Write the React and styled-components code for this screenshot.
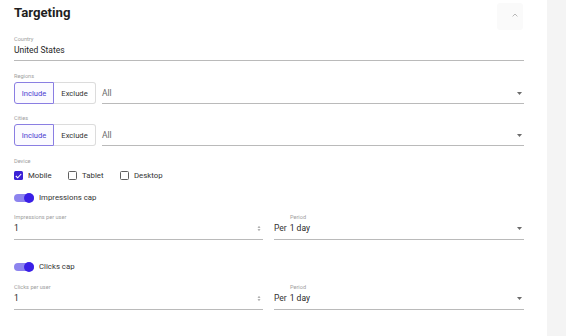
import React from "react";
import styled, { createGlobalStyle } from "styled-components";

const GlobalStyle = createGlobalStyle`
  html, body {
    margin: 0;
    padding: 0;
    background: #fff;
  }
  body {
    font-family: Roboto, "Liberation Sans", sans-serif;
    font-weight: 400;
    color: #2b2b2b;
  }
`;

const Page = styled.div`
  display: flex;
  width: 566px;
  height: 336px;
  overflow: hidden;
`;

const Card = styled.section`
  width: 547px;
  box-sizing: border-box;
  padding: 0 23px 0 14px;
  background: #fff;
  display: flex;
  flex-direction: column;
`;

const Aside = styled.div`
  flex: 1;
  background: #f4f4f4;
`;

const Header = styled.div`
  display: flex;
  justify-content: space-between;
  align-items: flex-start;
  height: 30px;
`;

const Title = styled.h2`
  margin: 5px 0 0;
  font-size: 13.2px;
  line-height: 16px;
  font-weight: 700;
  color: #1e1e1e;
`;

const CollapseButton = styled.button`
  width: 26px;
  height: 27px;
  margin-top: 3px;
  margin-right: 1px;
  padding: 0 5px 4px 0;
  border: none;
  border-radius: 3px;
  background: #fafafa;
  display: flex;
  align-items: center;
  justify-content: flex-end;
`;

const Field = styled.div`
  margin-top: ${(p) => p.mt || 0}px;
  display: flex;
  flex-direction: column;
`;

const Label = styled.div`
  font-size: 5.6px;
  line-height: 7px;
  color: #a0a0a0;
  padding-left: ${(p) => p.indent || 0}px;
`;

const InputRow = styled.div`
  display: flex;
  align-items: center;
  margin-top: 1px;
  height: 12px;
  padding-bottom: ${(p) => p.pb || 4}px;
  border-bottom: 1px solid #bababa;
  font-size: 8.5px;
  line-height: 12px;
  color: #262626;
`;

const Adornment = styled.span`
  margin-right: 3px;
  color: #333;
`;

const Trail = styled.span`
  margin-left: auto;
  margin-right: 2px;
  display: flex;
  align-items: center;
`;

const GroupRow = styled.div`
  display: flex;
  gap: 6px;
  margin-top: 2px;
  height: 22px;
`;

const ToggleGroup = styled.div`
  display: flex;
  width: 82px;
`;

const ToggleButton = styled.button`
  box-sizing: border-box;
  height: 22px;
  width: ${(p) => (p.selected ? 40 : 42)}px;
  padding: 0;
  font-family: inherit;
  font-size: 7.6px;
  font-weight: 400;
  border: 1px solid ${(p) => (p.selected ? "#8a7ee2" : "#dcdcdc")};
  border-left: ${(p) => (p.selected ? "1px solid #8a7ee2" : "none")};
  border-radius: ${(p) => (p.selected ? "3px 0 0 3px" : "0 3px 3px 0")};
  background: ${(p) => (p.selected ? "#fbfaff" : "#fff")};
  color: ${(p) => (p.selected ? "#4a3bd0" : "#333")};
`;

const SelectBox = styled.div`
  flex: 1;
  box-sizing: border-box;
  display: flex;
  align-items: center;
  border-bottom: 1px solid #bababa;
  font-size: 8.5px;
  color: #6a6a6a;
  padding-top: 1px;
`;

const CheckRow = styled.div`
  display: flex;
  align-items: center;
  gap: 16.5px;
  margin-top: 4px;
  height: 14px;
`;

const CheckItem = styled.label`
  display: flex;
  align-items: center;
  gap: 5px;
  font-size: 7.8px;
  font-weight: 400;
  color: #333;
`;

const Box = styled.span`
  box-sizing: border-box;
  width: 9px;
  height: 9px;
  border-radius: 1.5px;
  border: ${(p) => (p.checked ? "none" : "1.1px solid #606060")};
  background: ${(p) => (p.checked ? "#3b22d6" : "#fff")};
  display: flex;
  align-items: center;
  justify-content: center;
`;

const SwitchRow = styled.div`
  display: flex;
  align-items: center;
  gap: 5px;
  margin-top: ${(p) => p.mt || 0}px;
  height: 14px;
  font-size: 7.8px;
  font-weight: 400;
  color: #333;
`;

const SwitchTrack = styled.span`
  position: relative;
  width: 20px;
  height: 8px;
  border-radius: 4px;
  background: #8d84ee;
`;

const SwitchThumb = styled.span`
  position: absolute;
  left: 10px;
  top: -1px;
  width: 10px;
  height: 10px;
  border-radius: 50%;
  background: #3a1fe6;
`;

const TwoCols = styled.div`
  display: grid;
  grid-template-columns: 249px 250px;
  column-gap: 11px;
  margin-top: ${(p) => p.mt || 0}px;
`;

const Chevron = () => (
  <svg width="6" height="4" viewBox="0 0 6 4">
    <path d="M0.6 3.4 L3 1 L5.4 3.4" fill="none" stroke="#b0b0b0" strokeWidth="0.9" />
  </svg>
);

const Caret = () => (
  <svg width="5" height="3" viewBox="0 0 5 3">
    <path d="M0 0 H5 L2.5 3 Z" fill="#6b6b6b" />
  </svg>
);

const Spinner = () => (
  <svg width="4" height="7" viewBox="0 0 4 7">
    <path d="M0.5 2.7 L2 1 L3.5 2.7 Z M0.5 4.3 L2 6 L3.5 4.3 Z" fill="#9a9a9a" />
  </svg>
);

const Check = () => (
  <svg width="7" height="6" viewBox="0 0 7 6">
    <path d="M0.8 3 L2.7 4.8 L6.2 1" fill="none" stroke="#fff" strokeWidth="1.1" />
  </svg>
);

const Checkbox = ({ checked, label }) => (
  <CheckItem>
    <Box checked={checked}>{checked && <Check />}</Box>
    {label}
  </CheckItem>
);

const Switch = ({ label, mt }) => (
  <SwitchRow mt={mt}>
    <SwitchTrack>
      <SwitchThumb />
    </SwitchTrack>
    {label}
  </SwitchRow>
);

const IncludeSelect = ({ label, mt }) => (
  <Field mt={mt}>
    <Label>{label}</Label>
    <GroupRow>
      <ToggleGroup>
        <ToggleButton selected>Include</ToggleButton>
        <ToggleButton>Exclude</ToggleButton>
      </ToggleGroup>
      <SelectBox>
        All
        <Trail>
          <Caret />
        </Trail>
      </SelectBox>
    </GroupRow>
  </Field>
);

const CapFields = ({ label, mt }) => (
  <TwoCols mt={mt}>
    <Field>
      <Label>{label}</Label>
      <InputRow pb={5}>
        1
        <Trail>
          <Spinner />
        </Trail>
      </InputRow>
    </Field>
    <Field>
      <Label indent={16}>Period</Label>
      <InputRow pb={5}>
        <Adornment>Per</Adornment>1 day
        <Trail>
          <Caret />
        </Trail>
      </InputRow>
    </Field>
  </TwoCols>
);

export default function App() {
  return (
    <Page>
      <GlobalStyle />
      <Card>
        <Header>
          <Title>Targeting</Title>
          <CollapseButton>
            <Chevron />
          </CollapseButton>
        </Header>

        <Field mt={5.5}>
          <Label>Country</Label>
          <InputRow>United States</InputRow>
        </Field>

        <IncludeSelect label="Regions" mt={12.5} />
        <IncludeSelect label="Cities" mt={11} />

        <Field mt={11.5}>
          <Label>Device</Label>
          <CheckRow>
            <Checkbox checked label="Mobile" />
            <Checkbox label="Tablet" />
            <Checkbox label="Desktop" />
          </CheckRow>
        </Field>

        <Switch label="Impressions cap" mt={8} />
        <CapFields label="Impressions per user" mt={9.5} />

        <Switch label="Clicks cap" mt={19.5} />
        <CapFields label="Clicks per user" mt={10.5} />
      </Card>
      <Aside />
    </Page>
  );
}
